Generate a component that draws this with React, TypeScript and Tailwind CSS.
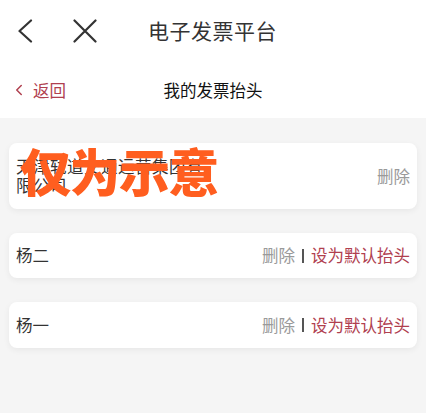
import { ChevronLeft } from "lucide-react";

const font = { fontFamily: '"Noto Sans CJK SC", "Noto Sans", sans-serif' };

function Actions({ setDefault }: { setDefault?: boolean }) {
  return (
    <div className="flex items-center text-[16.5px]">
      <span className="text-[#9a9a9a]">删除</span>
      {setDefault && (
        <>
          <span className="mx-[7px] h-[14px] w-[2px] bg-[#555]" />
          <span className="text-[#b0404f]">设为默认抬头</span>
        </>
      )}
    </div>
  );
}

export default function App() {
  return (
    <div className="flex h-[413px] w-[426px] flex-col overflow-hidden bg-[#f5f5f5]" style={font}>
      <div className="flex h-[62px] items-center bg-white">
        <svg width="16" height="24" viewBox="0 0 16 24" className="ml-[17px]" fill="none" stroke="#333" strokeWidth="2.2" strokeLinecap="round" strokeLinejoin="round">
          <path d="M14 1.5 L2.5 12 L14 22.5" />
        </svg>
        <svg width="24" height="24" viewBox="0 0 24 24" className="ml-[40px]" fill="none" stroke="#333" strokeWidth="2.2" strokeLinecap="round">
          <path d="M1.5 1.5 L22.5 22.5 M22.5 1.5 L1.5 22.5" />
        </svg>
        <span className="ml-[51px] text-[21px] tracking-[0.5px] text-[#333]">电子发票平台</span>
      </div>
      <div className="relative flex h-[56px] items-center justify-center bg-white">
        <div className="absolute left-[10px] flex items-center text-[16.5px] text-[#b0404f]">
          <ChevronLeft size={18} strokeWidth={2} />
          <span className="ml-[5px]">返回</span>
        </div>
        <span className="text-[16.5px] text-[#111]">我的发票抬头</span>
      </div>
      <div className="flex flex-col gap-[24px] px-[9px] pt-[25px]">
        <div className="relative flex h-[66px] items-center justify-between rounded-[8px] bg-white px-[7px] shadow-[0_2px_6px_rgba(0,0,0,0.06)]">
          <span className="w-[192px] text-[16.5px] leading-[19px] tracking-[0.5px] text-[#333]">天津轨道交通运营集团有限公司</span>
          <Actions />
          <span className="absolute left-[11px] top-[-6px] text-[51px] font-black leading-[66px] tracking-[-1.5px] text-[#ff5e1f]">仅为示意</span>
        </div>
        <div className="flex h-[45px] items-center justify-between rounded-[8px] bg-white px-[7px] shadow-[0_2px_6px_rgba(0,0,0,0.06)]">
          <span className="text-[16.5px] text-[#333]">杨二</span>
          <Actions setDefault />
        </div>
        <div className="flex h-[46px] items-center justify-between rounded-[8px] bg-white px-[7px] shadow-[0_2px_6px_rgba(0,0,0,0.06)]">
          <span className="text-[16.5px] text-[#333]">杨一</span>
          <Actions setDefault />
        </div>
      </div>
    </div>
  );
}
